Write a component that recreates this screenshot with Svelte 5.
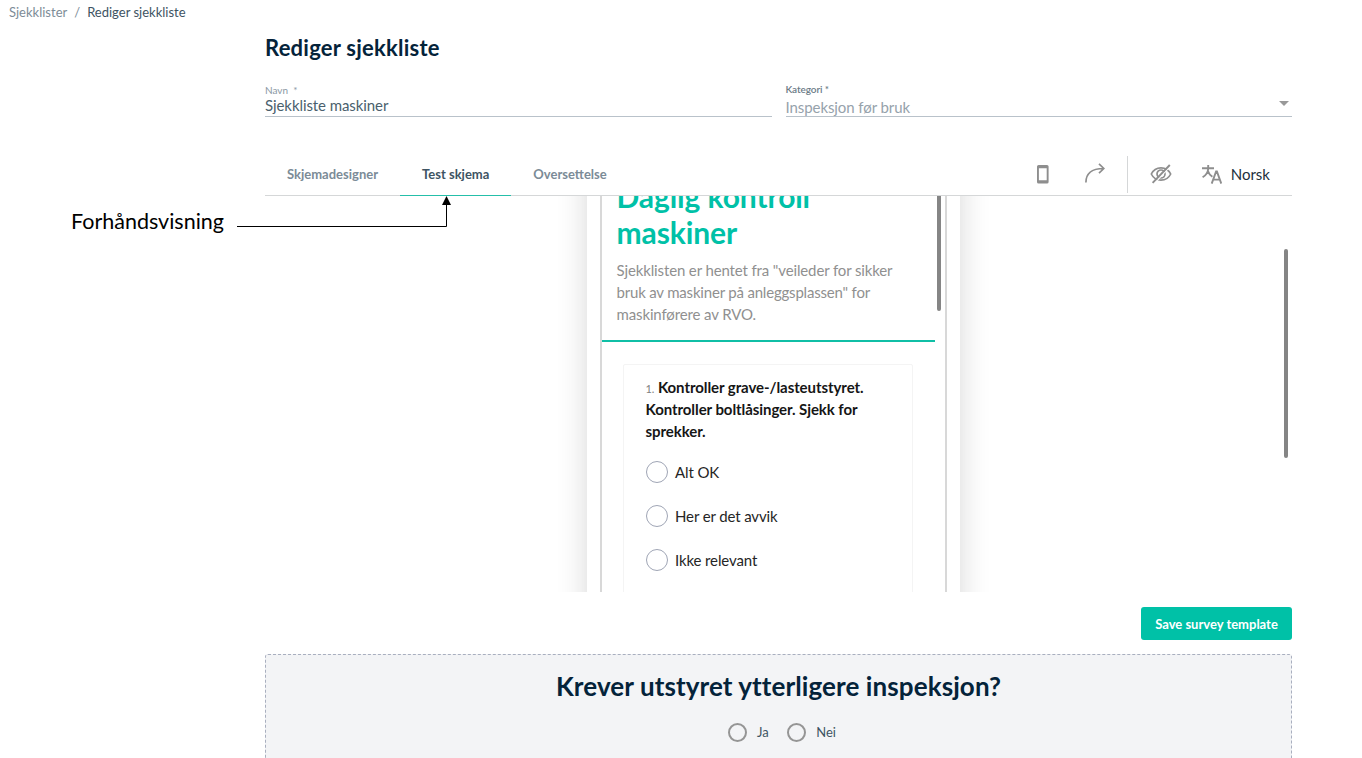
<script>
  const tabs = ['Skjemadesigner', 'Test skjema', 'Oversettelse'];
  let active = $state('Test skjema');
  const options = ['Alt OK', 'Her er det avvik', 'Ikke relevant'];
</script>

<div class="page">
  <nav class="crumbs">
    <span>Sjekklister</span><span class="slash">/</span><span class="current">Rediger sjekkliste</span>
  </nav>

  <main>
    <h1>Rediger sjekkliste</h1>

    <div class="fields">
      <div class="field">
        <span class="label">Navn &nbsp;*</span>
        <span class="value">Sjekkliste maskiner</span>
      </div>
      <div class="field select">
        <span class="label">Kategori *</span>
        <span class="value">Inspeksjon før bruk</span>
        <svg class="caret" width="10" height="5" viewBox="0 0 10 5"><path d="M0 0h10L5 5z" fill="#999" /></svg>
      </div>
    </div>

    <div class="toolbar">
      <div class="tabs">
        {#each tabs as tab}
          <button class="tab" class:active={tab === active} onclick={() => (active = tab)}>{tab}</button>
        {/each}
      </div>
      <div class="tools">
        <svg class="phone-icon" width="12" height="19" viewBox="0 0 12 19"><path fill="#8e8e8e" fill-rule="evenodd" d="M1.600 0h8.400a1.600 1.600 0 0 1 1.600 1.600v15.400a1.600 1.600 0 0 1-1.600 1.600H1.600A1.600 1.600 0 0 1 0 17V1.600A1.600 1.600 0 0 1 1.600 0zM1.900 3.200v12h7.800v-12z" /></svg>
        <svg class="arrow-icon" width="20" height="20" viewBox="0 0 20 20" fill="none" stroke="#8e8e8e" stroke-width="1.700"><path d="M.900 19.500C.900 11 6 5.500 18.600 5.500M14 .900l4.800 4.600-4.800 4.600" /></svg>
        <span class="divider"></span>
        <svg class="eye-icon" width="22" height="20" viewBox="0 0 22 20" fill="none" stroke="#8e8e8e" stroke-width="1.700"><path d="M1.300 10C3.200 6.100 6.700 3.800 11 3.800s7.800 2.300 9.700 6.200c-1.900 3.900-5.400 6.200-9.700 6.200S3.200 13.900 1.300 10z" /><circle cx="11" cy="10" r="4" /><path d="M4.100 19.900L20.200 2.300" stroke="#fff" stroke-width="1.200" /><path d="M2.600 18.900L19.800 1" stroke-width="1.900" /></svg>
        <svg class="lang-icon" width="20" height="19" viewBox="0 0 20 19" fill="none" stroke="#8e8e8e" stroke-width="1.900"><path d="M0 3.200h12M6.200 0v3.800C6 7.600 3.600 10.500.6 12.300M5.700 5.500c.900 2.700 2.500 4.800 4.700 6.300M9.700 18.600l4.400-12.200h.800l4.400 12.200M11.200 14.600h6.600" /></svg>
        <span class="lang">Norsk</span>
      </div>
    </div>

    <section class="preview">
      <div class="device">
        <div class="screen">
          <header>
            <h2>Daglig kontroll<br />maskiner</h2>
            <p>Sjekklisten er hentet fra "veileder for sikker<br /><span class="tight">bruk av maskiner på anleggsplassen" for</span><br />maskinførere av RVO.</p>
          </header>
          <div class="card">
            <div class="question"><small>1.</small> Kontroller grave-/lasteutstyret.<br />Kontroller boltlåsinger. Sjekk for<br />sprekker.</div>
            {#each options as option}
              <div class="option"><i></i><span>{option}</span></div>
            {/each}
          </div>
          <span class="thumb inner"></span>
        </div>
      </div>
      <span class="thumb outer"></span>
    </section>

    <div class="actions"><button class="save">Save survey template</button></div>

    <section class="more">
      <h3>Krever utstyret ytterligere inspeksjon?</h3>
      <div class="radios">
        <i></i><span>Ja</span><i class="second"></i><span>Nei</span>
      </div>
    </section>
  </main>

  <span class="note">Forhåndsvisning</span>
  <svg class="pointer" width="216" height="34" viewBox="0 0 216 34"><path d="M0 30.500H209.500V8" fill="none" stroke="#000" /><path d="M209.500 0l4.500 9h-9z" /></svg>
</div>

<style>
  :global(body) { margin: 0; background: #fff; }
  .page, .page * { box-sizing: border-box; }
  .page { position: relative; height: 758px; overflow: hidden; font-family: Lato, "Liberation Sans", sans-serif; color: #3e5463; white-space: nowrap; }
  .crumbs { height: 26px; padding-left: 9px; font-size: 13px; line-height: 25px; color: #7d8c97; display: flex; }
  .slash { margin: 0 7px; }
  .current { color: #3e5463; }
  main { width: 1027px; margin-left: 265px; }
  h1 { margin: 0; height: 57px; line-height: 44px; font-size: 22px; letter-spacing: .23px; font-weight: 700; color: #04233a; }
  .fields { display: grid; grid-template-columns: 1fr 1fr; gap: 14px; }
  .field { position: relative; height: 34px; border-bottom: 1px solid #b9c2ca; display: flex; flex-direction: column; }
  .label { font-size: 10px; line-height: 15px; color: #8a98a3; }
  .value { font-size: 15px; line-height: 15px; letter-spacing: -.08px; color: #4a5f6d; }
  .select .label { line-height: 13px; font-weight: 600; letter-spacing: -.1px; color: #6c7c88; }
  .select .value { line-height: 22px; color: #96a2ab; }
  .caret { position: absolute; right: 3px; top: 18px; }
  .toolbar { margin-top: 37px; height: 42px; border-bottom: 1px solid #d5d7d8; display: flex; justify-content: space-between; }
  .tabs { display: flex; }
  .tab { height: 42px; padding: 0 22px; border: 0; border-bottom: 1px solid transparent; background: none; font: 700 13px/39px Lato, sans-serif; color: #7b8b97; }
  .tab.active { color: #3e5463; border-color: #25bfa9; }
  .tools { display: flex; align-items: center; padding-right: 22px; height: 40px; }
  .arrow-icon { margin: -2px 0 0 36px; }
  .divider { width: 1px; height: 37px; background: #d5d7d8; margin-left: 22px; }
  .eye-icon { margin-left: 22px; }
  .lang-icon { margin-left: 30px; }
  .lang { margin-left: 9px; font-size: 15px; color: #212f3b; }
  .preview { position: relative; height: 396px; overflow: hidden; }
  .device { width: 373px; height: 500px; margin: -40px 0 0 322px; padding: 40px 13px 0; background: #fff; box-shadow: 0 0 29px rgba(0,0,0,.16); }
  .screen { position: relative; height: 460px; border: solid #d8d8d8; border-width: 0 2px; overflow: hidden; }
  header { display: flow-root; height: 146px; width: 333px; border-bottom: 2px solid #10bfa6; padding-left: 14.500px; }
  h2 { margin: -18px 0 0; font-size: 30px; line-height: 36px; font-weight: 700; letter-spacing: -.1px; color: #00c1a7; }
  p { margin: 9px 0 0; font-size: 15px; line-height: 22px; letter-spacing: -.13px; color: #909090; }
  .tight { letter-spacing: -.19px; }
  .card { margin: 22px 0 0 21px; width: 290px; height: 400px; border: 1px solid #f4f4f4; border-radius: 2px; padding: 11px 21.500px; color: #161616; }
  .question { font-size: 15px; line-height: 22px; font-weight: 700; letter-spacing: -.07px; margin-bottom: 19px; }
  small { font-size: 11px; line-height: 0; font-weight: 400; color: #808080; }
  .option { display: flex; align-items: center; height: 22px; margin-bottom: 22px; font-size: 15px; letter-spacing: -.12px; gap: 7.500px; color: #252525; }
  .option i { width: 22px; height: 22px; border: 1px solid #9fa5b5; border-radius: 50%; }
  .thumb { position: absolute; width: 4px; background: #858585; border-radius: 2px; }
  .inner { right: 4px; top: -10px; height: 125px; }
  .outer { right: 4px; top: 53px; height: 209px; }
  .actions { display: flex; justify-content: flex-end; padding: 15px 0; height: 62px; }
  .save { width: 151px; height: 33px; border: 0; border-radius: 3px; background: #00c1a7; color: #fff; padding: 0; font: 700 13px/34px Lato, sans-serif; }
  .more { height: 140px; border: 1px dashed #a9afbf; border-radius: 3px; background: #f3f4f6; text-align: center; }
  h3 { margin: 11px 0 0; font-size: 26px; letter-spacing: .09px; line-height: 40px; font-weight: 700; color: #04233a; }
  .radios { display: flex; justify-content: center; align-items: center; margin: 16px 0 0 7px; height: 20px; font-size: 13px; gap: 10px; }
  .radios i { width: 19px; height: 19px; border: 2px solid #959595; border-radius: 50%; }
  .radios .second { margin-left: 8.500px; }
  .note { position: absolute; left: 71px; top: 207px; font-size: 21.500px; line-height: 28px; color: #000; }
  .pointer { position: absolute; left: 237px; top: 196px; }
</style>
